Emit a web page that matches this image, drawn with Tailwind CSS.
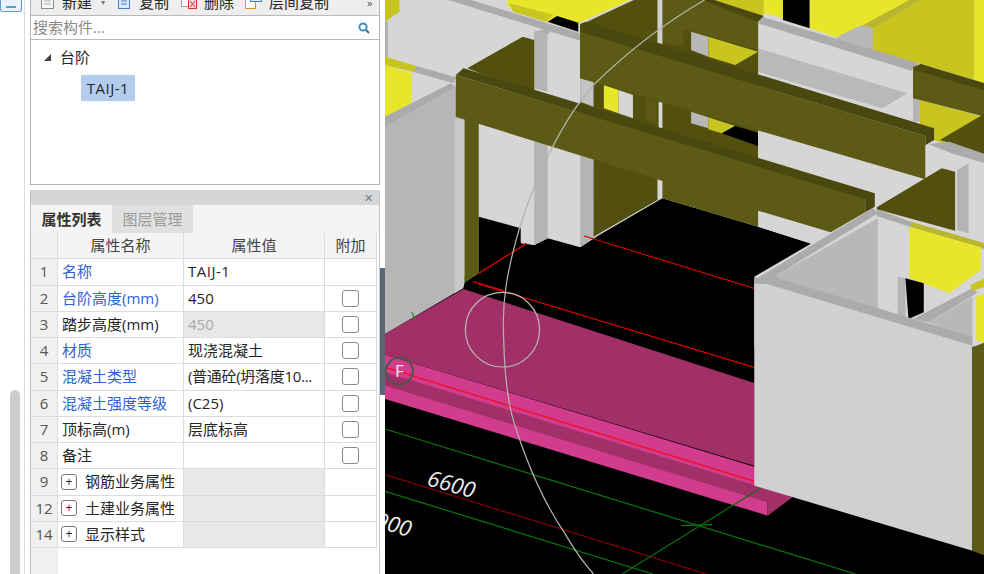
<!DOCTYPE html>
<html><head><meta charset="utf-8"><script src="https://cdn.jsdelivr.net/npm/@tailwindcss/browser@4"></script></head>
<body class="m-0 overflow-hidden bg-white">
<div class="flex w-[984px] h-[574px] overflow-hidden font-['Open_Sans','Noto_Sans_CJK_SC',sans-serif] text-[15px] text-[#262626]">
  <div class="w-[30px] flex flex-col shrink-0 bg-white">
    <div class="flex flex-col h-full w-[25px] border-r border-[#dcdcdc]">
      <div class="h-[12px] w-[22px] bg-[#eaf3fb] border border-t-0 border-[#5b9bd5] rounded-b-[3px] flex items-end justify-center pb-[3px]"><div class="w-[10px] h-[2px] bg-[#5b9bd5]"></div></div>
      <div class="mt-[378px] ml-[10px] w-[10px] flex-1 rounded-t-[5px] bg-[#cdcdcd]"></div>
    </div>
  </div>
  <div class="w-[350px] shrink-0 flex flex-col">
    <div class="h-[185px] flex flex-col border-r border-b border-l border-[#b4b4b4]">
      <div class="h-[16px] bg-[#eeeeee] border-b border-[#b9b9b9] relative overflow-hidden shrink-0">
        <div class="flex items-center h-[14px] -mt-[5px] leading-none">
          <svg class="ml-[10px]" width="13" height="14" viewBox="0 0 13 14"><rect x=".5" y=".5" width="12" height="13" fill="#f7f7f7" stroke="#8a8a8a"/><path d="M3 6h7M3 9h7" stroke="#aaa"/></svg>
          <span class="ml-[8px] w-[30px] whitespace-nowrap">新建</span>
          <span class="ml-[9px] text-[8px] text-[#777]">▾</span>
          <svg class="ml-[11px]" width="16" height="14" viewBox="0 0 16 14"><rect x="2.5" y=".5" width="11" height="13" fill="#dcebfa" stroke="#4a7fc8"/><path d="M5 6h6M5 9h6" stroke="#4a7fc8"/></svg>
          <span class="ml-[7px] w-[30px] whitespace-nowrap">复制</span>
          <svg class="ml-[12px]" width="17" height="14" viewBox="0 0 17 14"><rect x=".5" y=".5" width="9" height="11" fill="#fff" stroke="#999"/><rect x="7.5" y="4.5" width="8" height="9" fill="#f8d8d8" stroke="#d83030"/><path d="M9 6l5 6M14 6l-5 6" stroke="#d83030"/></svg>
          <span class="ml-[6px] w-[30px] whitespace-nowrap">删除</span>
          <svg class="ml-[11px]" width="17" height="14" viewBox="0 0 17 14"><rect x=".5" y="3.5" width="10" height="10" fill="#fff" stroke="#e8902c"/><rect x="5.5" y=".5" width="11" height="6" fill="#d8e8f8" stroke="#4a7fc8"/></svg>
          <span class="ml-[7px] w-[60px] whitespace-nowrap">层间复制</span>
          <span class="ml-[38px] text-[11px] text-[#555]">»</span>
        </div>
      </div>
      <div class="h-[24px] bg-white border-b border-[#b9b9b9] flex items-center justify-between pl-[2px] pr-[9px] shrink-0">
        <span class="text-[#8a8a8a]">搜索构件...</span>
        <svg width="12" height="12" viewBox="0 0 12 12" fill="none"><circle cx="5" cy="5" r="3.6" stroke="#3f8fc0" stroke-width="2"/><path d="M8 8l3 3" stroke="#2f6f9f" stroke-width="2"/></svg>
      </div>
      <div class="flex-1 bg-white pt-[4px]">
        <div class="flex items-center h-[26px] pl-[13px]">
          <span class="w-0 h-0 border-l-[7px] border-l-transparent border-b-[7px] border-b-[#444]"></span>
          <span class="ml-[9px]">台阶</span>
        </div>
        <div class="mt-[5px] ml-[50px] w-[54px] h-[26px] bg-[#b4cdee] flex items-center justify-center font-medium tracking-[0.5px]">TAIJ-1</div>
      </div>
    </div>
    <div class="h-[5px] bg-white shrink-0"></div>
    <div class="flex-1 flex flex-col border-l border-r border-[#c4c4c4] bg-white">
      <div class="h-[15px] bg-[#d4d6d8] flex items-center justify-end pr-[6px] text-[11px] leading-none text-[#777] shrink-0">✕</div>
      <div class="h-[28px] bg-[#f4f4f4] flex shrink-0">
        <div class="w-[81px] flex items-center justify-center font-bold text-[#333]">属性列表</div>
        <div class="w-[81px] bg-[#e0e0e0] flex items-center justify-center text-[#9a9a9a]">图层管理</div>
      </div>
      <div class="grid grid-cols-[27px_126px_141px_52px] grid-rows-[repeat(12,26.25px)] w-[346px] [&>div]:border-r [&>div]:border-b [&>div]:border-[#dcdcdc] [&>div]:flex [&>div]:items-center [&>div]:whitespace-nowrap [&>div]:leading-none">
        <div class="bg-[#f0f0f0]"></div><div class="bg-[#f4f4f4] justify-center text-[#444]">属性名称</div><div class="bg-[#f4f4f4] justify-center text-[#444]">属性值</div><div class="bg-[#f4f4f4] justify-center text-[#444]">附加</div>

        <div class="bg-[#f0f0f0] justify-center text-[#555]">1</div><div class="pl-[4px] text-[#2f62d2]">名称</div><div class="pl-[4px] tracking-[0.5px]">TAIJ-1</div><div></div>

        <div class="bg-[#f0f0f0] justify-center text-[#555]">2</div><div class="pl-[4px] text-[#2f62d2]">台阶高度(mm)</div><div class="pl-[4px]">450</div><div class="justify-center"><span class="w-[17px] h-[17px] rounded-[3px] border border-[#8a8a8a] bg-white"></span></div>

        <div class="bg-[#f0f0f0] justify-center text-[#555]">3</div><div class="pl-[4px]">踏步高度(mm)</div><div class="pl-[4px] bg-[#e8e8e8] text-[#a8a8a8]">450</div><div class="justify-center"><span class="w-[17px] h-[17px] rounded-[3px] border border-[#8a8a8a] bg-white"></span></div>

        <div class="bg-[#f0f0f0] justify-center text-[#555]">4</div><div class="pl-[4px] text-[#2f62d2]">材质</div><div class="pl-[4px]">现浇混凝土</div><div class="justify-center"><span class="w-[17px] h-[17px] rounded-[3px] border border-[#8a8a8a] bg-white"></span></div>

        <div class="bg-[#f0f0f0] justify-center text-[#555]">5</div><div class="pl-[4px] text-[#2f62d2]">混凝土类型</div><div class="pl-[4px] tracking-[-0.3px]">(普通砼(坍落度10...</div><div class="justify-center"><span class="w-[17px] h-[17px] rounded-[3px] border border-[#8a8a8a] bg-white"></span></div>

        <div class="bg-[#f0f0f0] justify-center text-[#555]">6</div><div class="pl-[4px] text-[#2f62d2]">混凝土强度等级</div><div class="pl-[4px]">(C25)</div><div class="justify-center"><span class="w-[17px] h-[17px] rounded-[3px] border border-[#8a8a8a] bg-white"></span></div>

        <div class="bg-[#f0f0f0] justify-center text-[#555]">7</div><div class="pl-[4px]">顶标高(m)</div><div class="pl-[4px]">层底标高</div><div class="justify-center"><span class="w-[17px] h-[17px] rounded-[3px] border border-[#8a8a8a] bg-white"></span></div>

        <div class="bg-[#f0f0f0] justify-center text-[#555]">8</div><div class="pl-[4px]">备注</div><div></div><div class="justify-center"><span class="w-[17px] h-[17px] rounded-[3px] border border-[#8a8a8a] bg-white"></span></div>

        <div class="bg-[#f0f0f0] justify-center text-[#555]">9</div><div class="pl-[3px]"><span class="w-[16px] h-[16px] rounded-[3px] border border-[#777] flex items-center justify-center text-[12px] leading-none">+</span><span class="ml-[8px]">钢筋业务属性</span></div><div class="bg-[#e8e8e8]"></div><div></div>

        <div class="bg-[#f0f0f0] justify-center text-[#555]">12</div><div class="pl-[3px]"><span class="w-[16px] h-[16px] rounded-[3px] border border-[#777] flex items-center justify-center text-[12px] leading-none">+</span><span class="ml-[8px]">土建业务属性</span></div><div class="bg-[#e8e8e8]"></div><div></div>

        <div class="bg-[#f0f0f0] justify-center text-[#555]">14</div><div class="pl-[3px]"><span class="w-[16px] h-[16px] rounded-[3px] border border-[#777] flex items-center justify-center text-[12px] leading-none">+</span><span class="ml-[8px]">显示样式</span></div><div class="bg-[#e8e8e8]"></div><div></div>
      </div>
      <div class="flex-1 flex"><div class="w-[27px] bg-[#f0f0f0]"></div></div>
    </div>
  </div>
  <div class="w-[5px] shrink-0 flex flex-col bg-white">
    <div class="h-[268px]"></div>
    <div class="h-[127px] bg-[#5a6875]"></div>
  </div>
  <div class="flex-1 bg-black overflow-hidden">
    <svg width="599" height="574" viewBox="0 0 599 574" class="block">
      <g transform="scale(0.38265 0.33333)" stroke="none">
        <polygon fill="#d6d6d6" points="0,0 1568,0 1568,1040 965,1040 965,830 0,830"/>
        <polygon fill="#c8c420" points="0,0 38,0 38,35 0,65"/>
        <polygon fill="#b0b0b0" points="0,65 8,62 8,172 0,170"/>
        <polygon fill="#ababab" points="165,0 225,0 510,100 510,122"/>
        <polygon fill="#e8e62a" points="320,0 640,0 505,70 450,48 425,65 320,20"/>
        <polygon fill="#c8c420" points="325,10 440,45 420,65 335,35"/>
        <polygon fill="#000" points="425,65 450,48 505,68 505,95"/>
        <polygon fill="#ababab" points="390,95 430,85 430,110 390,120"/>
        <polygon fill="#e8e62a" points="0,195 70,220 70,310 0,350"/>
        <polygon fill="#c8c420" points="0,170 82,198 75,216 0,195"/>
        <polygon fill="#ababab" points="82,198 185,232 180,250 75,216"/>
        <polygon fill="#ababab" points="0,350 172,250 185,262 0,382"/>
        <polygon fill="#b6b6b6" points="0,382 185,262 208,350 208,862 0,1002"/>
        <polygon fill="#c8c8c8" points="182,355 208,360 208,862 182,880"/>
        <polygon fill="#5d5a15" points="208,340 245,340 245,820 208,850"/>
        <polygon fill="#b4b4b4" points="390,90 425,100 425,275 390,265"/>
        <polygon fill="#53500f" points="215,205 360,110 390,120 390,275 260,225"/>
        <polygon fill="#000" points="245,650 355,685 355,730 390,735 425,715 510,742 560,705 725,595 975,680 1115,730 965,830 965,1110 205,1110 205,862 208,850 245,820"/>
        <polygon fill="#d6d6d6" points="355,400 425,400 425,715 390,735 355,725"/>
        <polygon fill="#b4b4b4" points="390,400 425,400 425,715 390,735"/>
        <polygon fill="#b4b4b4" points="510,440 545,440 545,715 510,742"/>
        <polygon fill="#53500f" points="545,440 712,500 712,600 545,710"/>
        <polygon fill="#c8c420" points="860,0 990,0 990,45 975,50"/>
        <polygon fill="#e8e62a" points="990,0 1040,0 1040,55 990,40"/>
        <polygon fill="#000" points="1040,0 1110,0 1110,85 1040,60"/>
        <polygon fill="#e8e62a" points="1110,0 1400,0 1180,112 1110,85"/>
        <polygon fill="#c8c420" points="1270,85 1400,0 1540,0 1540,240 1395,190 1270,150"/>
        <polygon fill="#b8b630" points="1245,78 1370,0 1400,0 1275,85"/>
        <polygon fill="#e8e62a" points="1540,0 1568,0 1568,250 1540,240"/>
        <polygon fill="#b8b8b8" points="1180,112 1245,75 1275,85 1275,150 1180,125"/>
        <polygon fill="#ababab" points="985,50 1395,190 1375,212 975,70"/>
        <polygon fill="#b9b9b9" points="975,145 915,195 1300,325 1365,280"/>
        <polygon fill="#b4b4b4" points="1380,210 1398,210 1398,365 1380,365"/>
        <polygon fill="#c8c420" points="1398,300 1568,352 1445,425 1398,400"/>
        <polygon fill="#5d5a15" points="1380,200 1400,192 1568,255 1568,350 1380,295"/>
        <polygon fill="#4a470f" points="1400,192 1568,250 1568,272 1384,210"/>
        <polygon fill="#53500f" points="510,75 650,0 860,0 975,55 975,480 510,400"/>
        <polygon fill="#5d5a15" points="725,0 835,0 975,50 975,150 800,92 780,90 780,140 725,125"/>
        <polygon fill="#4a470f" points="830,0 860,0 990,48 975,65"/>
        <polygon fill="#cfcfcf" points="712,0 725,0 725,132 712,128"/>
        <polygon fill="#b8b8b8" points="800,95 845,110 845,170 800,150"/>
        <polygon fill="#c8c420" points="845,110 975,155 915,195 845,170"/>
        <polygon fill="#c4c4c4" points="510,235 545,245 545,320 510,305"/>
        <polygon fill="#d6d6d6" points="425,100 510,122 510,310 425,280"/>
        <polygon fill="#e8e62a" points="572,255 610,270 610,340 572,325"/>
        <polygon fill="#d6d6d6" points="610,270 648,285 648,355 610,340"/>
        <polygon fill="#5d5a15" points="682,295 710,305 710,370 682,360"/>
        <polygon fill="#d6d6d6" points="715,305 725,308 725,385 715,382"/>
        <polygon fill="#b8b8b8" points="800,335 845,352 845,385 800,370"/>
        <polygon fill="#c8c420" points="845,352 915,378 880,400 845,388"/>
        <polygon fill="#000" points="880,400 915,378 975,398 975,438"/>
        <polygon fill="#d6d6d6" points="975,380 1395,520 1395,540 1280,622 975,480"/>
        <polygon fill="#d6d6d6" points="975,630 1170,697 1115,732 975,680"/>
        <polygon fill="#4a470f" points="510,72 525,65 1435,385 1435,420 1412,436 1412,408 510,98"/>
        <polygon fill="#5d5a15" points="510,95 1412,408 1412,538 510,235"/>
        <polygon fill="#4a470f" points="185,225 205,205 1280,580 1280,620 1255,637 1255,600"/>
        <polygon fill="#5d5a15" points="185,225 1255,598 1255,637 1165,697 975,632 975,680 725,595 725,543 185,350"/>
        <polygon fill="#c8c420" points="1445,425 1568,350 1568,370 1460,430"/>
        <polygon fill="#53500f" points="1450,420 1568,340 1568,465 1480,430"/>
        <polygon fill="#ababab" points="1420,432 1475,425 1568,462 1568,490 1480,460"/>
        <polygon fill="#b4b4b4" points="1495,510 1525,490 1525,700 1495,690"/>
        <polygon fill="#53500f" points="1285,622 1455,505 1490,515 1490,692 1285,628"/>
        <polygon fill="#ababab" points="965,840 1275,625 1288,640 1025,825 1025,1040 965,1040"/>
        <polygon fill="#b8b8b8" points="1025,825 1288,655 1288,1040 1025,1040"/>
        <polygon fill="#ababab" points="1285,628 1375,665 1375,682 1285,648"/>
        <polygon fill="#b8b630" points="1375,665 1568,730 1568,748 1375,682"/>
        <polygon fill="#e8e62a" points="1370,680 1557,742 1557,810 1475,879 1370,834"/>
        <polygon fill="#b4b4b4" points="1340,830 1360,835 1360,1040 1340,1040"/>
        <polygon fill="#000" points="1360,835 1408,850 1408,937 1368,957"/>
        <polygon fill="#ababab" points="1380,957 1535,865 1548,878 1420,967"/>
        <polygon fill="#b8b8b8" points="1420,967 1535,890 1535,1020"/>
        <polygon fill="#e8e62a" points="1545,890 1568,880 1568,1030 1545,1020"/>
        <polygon fill="#c8c420" points="1530,855 1568,835 1568,860 1535,872"/>
        <polygon fill="#a23068" points="205,867 965,1149 965,1397 0,1064 0,1002"/>
        <polygon fill="#d23c8c" points="0,1064 965,1400 1000,1500 1000,1547 0,1197"/>
        <polygon fill="#a23068" points="0,1117 1000,1467 1000,1507 0,1157"/>
        <polygon fill="#a23068" points="965,1450 1065,1492 1000,1547 1000,1497"/>
        <path d="M520,708L965,865" stroke="#c80000" stroke-width="1.2" vector-effect="non-scaling-stroke" fill="none"/>
        <path d="M245,852L965,1102" stroke="#d80000" stroke-width="1.3" vector-effect="non-scaling-stroke" fill="none"/>
        <path d="M230,845L310,872" stroke="#d80000" stroke-width="1.3" vector-effect="non-scaling-stroke" fill="none"/>
        <path d="M245,820L370,730" stroke="#d80000" stroke-width="1.3" vector-effect="non-scaling-stroke" fill="none"/>
        <path d="M0,1102L965,1444" stroke="#f01030" stroke-width="1.5" vector-effect="non-scaling-stroke" fill="none"/>
        <path d="M0,1287L1230,1722" stroke="#0a7a0a" stroke-width="1.2" vector-effect="non-scaling-stroke" fill="none"/>
        <path d="M0,1474L700,1722" stroke="#0a7a0a" stroke-width="1.2" vector-effect="non-scaling-stroke" fill="none"/>
        <path d="M0,1424L840,1722" stroke="#8a0000" stroke-width="1.2" vector-effect="non-scaling-stroke" fill="none"/>
        <path d="M620,1722L985,1462" stroke="#0c6e0c" stroke-width="1.2" vector-effect="non-scaling-stroke" fill="none"/>
        <path d="M775,1577L855,1574" stroke="#0a7a0a" stroke-width="1.2" vector-effect="non-scaling-stroke" fill="none"/>
        <path d="M70,937L78,957" stroke="#2a8a2a" stroke-width="1.2" vector-effect="non-scaling-stroke" fill="none"/>
        <polygon fill="#d0d0d0" points="965,850 1000,852 1535,1037 1535,1652 965,1457"/>
        <polygon fill="#ababab" points="965,835 1000,825 1535,1010 1535,1037 1000,852 965,850"/>
        <polygon fill="#5d5a15" points="1535,1042 1568,1027 1568,1667 1535,1652"/>
        <path d="M835,0C715,80 620,170 545,255C470,350 395,520 350,690C320,810 305,900 310,1010C312,1120 318,1190 335,1260C365,1370 410,1500 470,1600C495,1650 520,1690 545,1722" stroke="#b4b4aa" stroke-width="1.2" vector-effect="non-scaling-stroke" fill="none"/>
        <ellipse cx="307" cy="989" rx="97" ry="112" stroke="#b8b8b0" stroke-width="1.2" vector-effect="non-scaling-stroke" fill="none"/>
      </g>
      <circle cx="14.5" cy="371" r="13.5" fill="none" stroke="#4a5a4a" stroke-width="2"/>
      <text x="14.5" y="377" text-anchor="middle" font-size="17" fill="#f0e8f0" font-family="Open Sans">F</text>
      <text transform="translate(41 485) rotate(16)" font-size="22" font-style="italic" fill="#ececec" font-family="Open Sans">6600</text>
      <text transform="translate(-11 527) rotate(16)" font-size="22" font-style="italic" fill="#ececec" font-family="Open Sans">900</text>
    </svg>
  </div>
</div>
</body></html>
